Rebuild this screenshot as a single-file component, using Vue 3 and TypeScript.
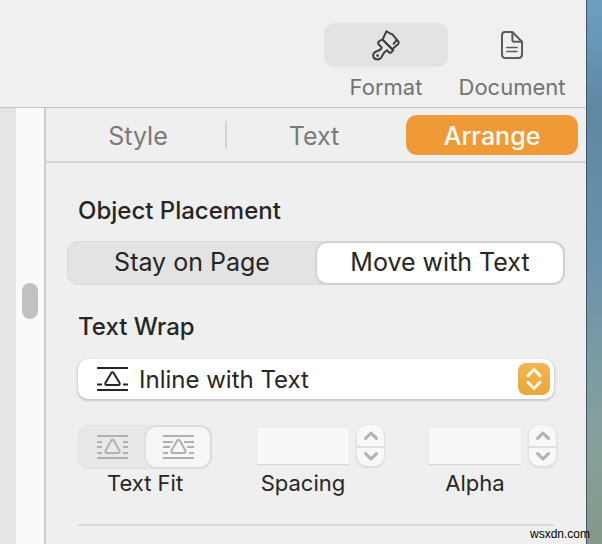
<script setup lang="ts">
import { ref } from 'vue'

type Tab = 'Style' | 'Text' | 'Arrange'

const tabs: Tab[] = ['Style', 'Text', 'Arrange']
const placements: string[] = ['Stay on Page', 'Move with Text']
const wraps: string[] = ['Inline with Text', 'Automatic', 'Around', 'Above and Below', 'None']

const mode = ref<'format' | 'document'>('format')
const tab = ref<Tab>('Arrange')
const placement = ref('Move with Text')
const wrap = ref('Inline with Text')
const spacing = ref('')
const alpha = ref('')
</script>

<template>
  <div class="desktop">
    <div class="window">
      <header class="toolbar">
        <button class="tool" :class="{ active: mode === 'format' }" type="button" @click="mode = 'format'">
          <span class="tool-icon">
            <svg width="30" height="32" viewBox="0 0 30 32" fill="none" stroke="#3f3f3f" stroke-width="2" stroke-linejoin="round" stroke-linecap="round">
              <path d="M15.4 2.2 C17 4 20 4.6 21.6 5.6 L27.4 12.6 Q28.2 14 27.2 15 L21.2 20.2 L11.6 10.6 Z" />
              <path d="M9.3 11.4 L11.6 10.6 L22.2 21.2 L20 23.6 Q19 24.2 18 23.4 L16 21.2 L13.8 23 C12.2 24.4 11.8 26.2 10.2 28.6 C8.2 31.4 3 30.8 2.2 27.2 C1.8 24.4 3.8 22.8 6.4 22 C8.6 21.2 10.2 20.4 10.8 18.6 L7.4 15 Q6.6 13.8 7.6 12.8 Z" />
              <path d="M22.6 14.8 L25.6 11.2" />
              <circle cx="6.6" cy="26.6" r="1.4" fill="#3f3f3f" stroke="none" />
            </svg>
          </span>
          <span class="tool-label">Format</span>
        </button>
        <button class="tool doc" :class="{ active: mode === 'document' }" type="button" @click="mode = 'document'">
          <span class="tool-icon">
            <svg width="22" height="28" viewBox="0 0 22 28" fill="none" stroke="#5c5c5c" stroke-width="2" stroke-linejoin="round" stroke-linecap="round">
              <path d="M4 1 H11.4 L21 10.8 V23.6 Q21 27 17.8 27 H4 Q1 27 1 23.6 V4.4 Q1 1 4 1 Z" />
              <path d="M11.4 1.4 V9 Q11.4 10.8 13.2 10.8 H20.6" />
              <path d="M5.8 16.5 H16 M5.8 20.5 H16" stroke-width="1.6" />
            </svg>
          </span>
          <span class="tool-label">Document</span>
        </button>
      </header>

      <div class="content">
        <div class="canvas"></div>
        <div class="scroller"><div class="thumb"></div></div>

        <aside class="inspector">
          <nav class="tabs">
            <button v-for="t in tabs" :key="t" class="tab" :class="{ selected: tab === t }" type="button" @click="tab = t">{{ t }}</button>
          </nav>

          <section class="pane">
            <h2>Object Placement</h2>
            <div class="segments">
              <button v-for="p in placements" :key="p" class="segment" :class="{ on: placement === p }" type="button" @click="placement = p">{{ p }}</button>
            </div>

            <h2><label for="wrap">Text Wrap</label></h2>
            <div class="popup">
              <select id="wrap" v-model="wrap">
                <option v-for="w in wraps" :key="w">{{ w }}</option>
              </select>
              <svg class="wrap-icon" width="31" height="24" viewBox="0 0 31 24" fill="none" stroke="#262626">
                <path d="M0 1 H31 M0 23 H31" stroke-width="2" />
                <path d="M0 17.5 H5 M26 17.5 H31" stroke-width="2" />
                <path d="M14.2 6.2 Q15.5 4.4 16.8 6.2 L22.6 16 Q23.2 18 21.4 18 H9.6 Q7.8 18 8.4 16 Z" stroke-width="2" />
              </svg>
              <span class="arrows">
                <svg width="16" height="24" viewBox="0 0 16 24" fill="none" stroke="#fffbea" stroke-width="3" stroke-linecap="round" stroke-linejoin="round">
                  <path d="M2 8.6 L8 2.6 L14 8.6 M2 15.4 L8 21.4 L14 15.4" />
                </svg>
              </span>
            </div>

            <div class="fields">
              <div class="field">
                <div class="fit">
                  <button class="fit-option" type="button" disabled aria-labelledby="fit-label">
                    <svg width="31" height="26" viewBox="0 0 31 26" fill="none" stroke="#b0b0b0" stroke-width="2">
                      <path d="M0 2 H31 M0 24 H31 M0 8 H5 M26 8 H31 M0 13 H5 M26 13 H31 M0 19 H5 M26 19 H31" />
                      <path d="M14.2 6.6 Q15.5 5 16.8 6.6 L22.4 16.6 Q23 19 21.4 19 H9.6 Q8 19 8.6 16.6 Z" />
                    </svg>
                  </button>
                  <button class="fit-option on" type="button" disabled aria-labelledby="fit-label">
                    <svg width="31" height="26" viewBox="0 0 31 26" fill="none" stroke="#b0b0b0" stroke-width="2">
                      <path d="M0 2 H31 M0 24 H31 M0 8 H10 M21 8 H31 M0 13 H7 M24 13 H31 M0 19 H5 M26 19 H31" />
                      <path d="M14.2 6.6 Q15.5 5 16.8 6.6 L22.4 16.6 Q23 19 21.4 19 H9.6 Q8 19 8.6 16.6 Z" />
                    </svg>
                  </button>
                </div>
                <span id="fit-label" class="caption">Text Fit</span>
              </div>

              <div class="field stepped">
                <input id="spacing" v-model="spacing" type="text" disabled />
                <div class="stepper">
                  <button type="button" disabled aria-label="Increase">
                    <svg width="14" height="9" viewBox="0 0 14 9"><path d="M1.6 7.4 L7 2 L12.4 7.4" /></svg>
                  </button>
                  <button type="button" disabled aria-label="Decrease">
                    <svg width="14" height="9" viewBox="0 0 14 9"><path d="M1.6 1.6 L7 7 L12.4 1.6" /></svg>
                  </button>
                </div>
                <label class="caption" for="spacing">Spacing</label>
              </div>

              <div class="field stepped">
                <input id="alpha" v-model="alpha" type="text" disabled />
                <div class="stepper">
                  <button type="button" disabled aria-label="Increase">
                    <svg width="14" height="9" viewBox="0 0 14 9"><path d="M1.6 7.4 L7 2 L12.4 7.4" /></svg>
                  </button>
                  <button type="button" disabled aria-label="Decrease">
                    <svg width="14" height="9" viewBox="0 0 14 9"><path d="M1.6 1.6 L7 7 L12.4 1.6" /></svg>
                  </button>
                </div>
                <label class="caption" for="alpha">Alpha</label>
              </div>
            </div>

            <hr />
          </section>
        </aside>
      </div>
    </div>
    <span class="credit">wsxdn.com</span>
  </div>
</template>

<style>
body {
  margin: 0;
}
</style>

<style scoped>
.desktop {
  position: relative;
  box-sizing: border-box;
  min-height: 100vh;
  padding-right: 15px;
  display: flex;
  overflow: hidden;
  background: linear-gradient(#6d9fc2 0%, #5f88a4 20%, #6891ae 46%, #7698a5 60%, #86a19d 80%, #85998a 100%);
  font-family: Inter, Roboto, sans-serif;
  color: #262626;
}

.window {
  flex: 1;
  display: flex;
  flex-direction: column;
  background: #efefef;
  border-right: 1px solid #3f5766;
}

button {
  padding: 0;
  border: 0;
  background: none;
  font: inherit;
  color: inherit;
}

.toolbar {
  display: flex;
  justify-content: flex-end;
  gap: 10px;
  padding: 23px 20px 6px;
  border-bottom: 1px solid #c6c6c6;
  background: #f0f0f0;
}

.tool {
  display: flex;
  flex-direction: column;
  align-items: center;
  gap: 6px;
  width: 124px;
}

.tool.doc {
  width: 108px;
}

.tool-icon {
  display: flex;
  align-items: center;
  justify-content: center;
  align-self: stretch;
  height: 44px;
  border-radius: 10px;
}

.active .tool-icon {
  background: #e3e3e3;
}

.tool-label {
  font-size: 22px;
  line-height: 28px;
  color: #737373;
}

.content {
  flex: 1;
  display: flex;
}

.canvas {
  width: 16px;
  background: #e5e5e5;
}

.scroller {
  box-sizing: border-box;
  width: 28px;
  padding: 175px 0 0 6px;
  background: #fafafa;
}

.thumb {
  width: 16px;
  height: 36px;
  border-radius: 8px;
  background: #c1c1c1;
}

.inspector {
  flex: 1;
  border-left: 2px solid #cdcdcd;
}

.tabs {
  display: grid;
  grid-template-columns: repeat(3, 1fr);
  padding: 7px 8px 6px 4px;
  border-bottom: 2px solid #d6d6d6;
}

.tab {
  position: relative;
  height: 40px;
  padding-top: 2px;
  font-size: 25px;
  line-height: 38px;
  color: #7a7a7a;
}

.tab:first-child::after {
  content: '';
  position: absolute;
  top: 6px;
  right: -1px;
  width: 2px;
  height: 28px;
  background: #d4d4d4;
}

.tab.selected {
  margin-left: 4px;
  border-radius: 11px;
  background: #f09a37;
  color: #fffdf8;
  font-weight: 500;
}

.pane {
  padding: 34px 21px 16px;
}

h2 {
  margin: 0 11px;
  font-size: 24px;
  font-weight: 500;
  line-height: 28px;
}

.segments {
  display: grid;
  grid-template-columns: 1fr 1fr;
  gap: 2px;
  box-sizing: border-box;
  height: 44px;
  margin: 16px 0 28px;
  padding: 1px;
  border: 1px solid #d9d9d9;
  border-radius: 11px;
  background: #e3e3e3;
}

.segment {
  padding-bottom: 2px;
  border-radius: 10px;
  font-size: 25px;
}

.segment.on {
  background: #fff;
  box-shadow: 0 0 2px 1px #c4c4c4;
}

.popup {
  display: grid;
  align-items: center;
  height: 40px;
  margin: 18px 11px 0;
  border-radius: 10px;
  background: #fff;
  box-shadow: 0 1px 2px 1px #cbcbcb;
}

.popup > * {
  grid-area: 1 / 1;
}

.popup select {
  appearance: none;
  width: 100%;
  height: 40px;
  padding: 0 44px 0 61px;
  border: 0;
  border-radius: 10px;
  background: transparent;
  font: inherit;
  font-size: 24px;
  color: inherit;
}

.wrap-icon {
  margin-left: 19px;
  pointer-events: none;
}

.arrows {
  display: flex;
  align-items: center;
  justify-content: center;
  justify-self: end;
  width: 32px;
  height: 32px;
  margin-right: 4px;
  border-radius: 8px;
  background: linear-gradient(#f3b551, #eba737);
  pointer-events: none;
}

.fields {
  display: flex;
  justify-content: space-between;
  margin: 26px 9px 27px 11px;
}

.fit {
  display: grid;
  grid-template-columns: 1fr 1fr;
  gap: 2px;
  box-sizing: border-box;
  width: 134px;
  height: 44px;
  padding: 1px;
  border: 1px solid #e1e1e1;
  border-radius: 11px;
  background: #e8e8e8;
}

.field {
  display: flex;
  flex-direction: column;
}

.stepped {
  display: grid;
  grid-template-columns: 92px 27px;
  grid-template-rows: 44px auto;
  column-gap: 8px;
}

.fit-option {
  display: flex;
  align-items: center;
  justify-content: center;
  border-radius: 10px;
}

.fit-option.on {
  background: #f6f6f6;
  box-shadow: 0 0 2px 1px #d6d6d6;
}

.caption {
  font-size: 22px;
  line-height: 28px;
  text-align: center;
}

.stepped input {
  box-sizing: border-box;
  width: 100%;
  height: 36px;
  margin-top: 3px;
  padding: 0 6px;
  border: 0;
  background: #f8f8f8;
  box-shadow: 0 1px 1px #d8d8d8, 0 0 1px 1px #ebebeb;
  font: inherit;
  font-size: 22px;
}

.stepper {
  display: grid;
  grid-template-rows: 1fr 1fr;
  height: 41px;
  border-radius: 10px;
  background: #f8f8f8;
  box-shadow: 0 1px 2px 1px #dcdcdc;
}

.stepper button {
  display: flex;
  align-items: center;
  justify-content: center;
}

.stepper button:last-child {
  border-top: 2px solid #dedede;
}

.stepper path {
  fill: none;
  stroke: #b2b2b2;
  stroke-width: 3;
  stroke-linecap: round;
  stroke-linejoin: round;
}

hr {
  height: 2px;
  margin: 0 11px;
  border: 0;
  background: #d9d9d9;
}

.credit {
  position: absolute;
  right: 12px;
  bottom: 2px;
  font-family: 'Liberation Sans', Arial, sans-serif;
  font-size: 12px;
  line-height: 16px;
  color: #000;
}
</style>
